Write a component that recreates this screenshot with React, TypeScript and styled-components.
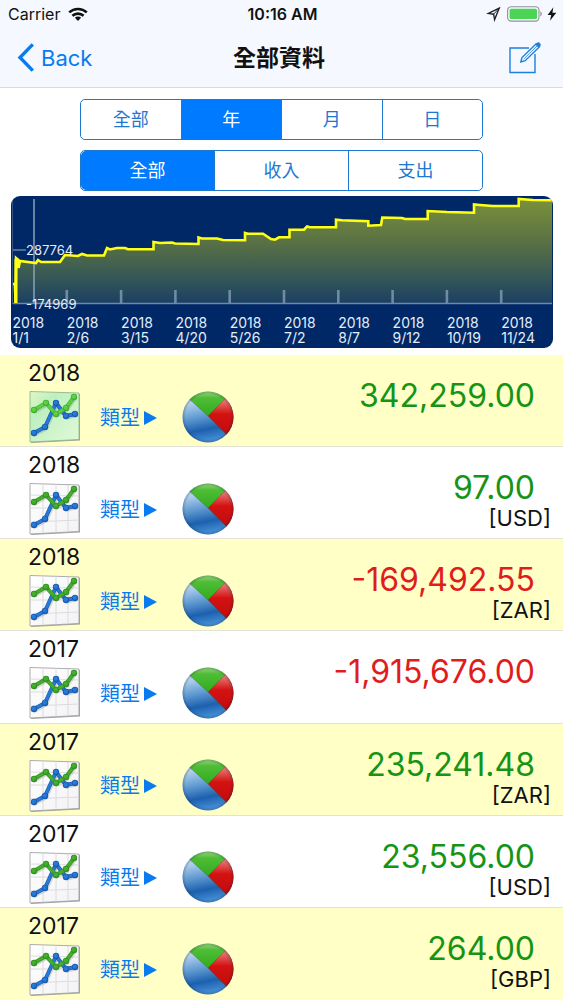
import React, { useState } from "react";
import styled, { createGlobalStyle, css } from "styled-components";

const GlobalStyle = createGlobalStyle`
  *, *::before, *::after { box-sizing: border-box; }
  body {
    margin: 0;
    background: #fff;
    color: #111;
    font-family: Inter, "Noto Sans CJK TC", sans-serif;
  }
  button, input { font: inherit; color: inherit; }
  button { margin: 0; padding: 0; border: 0; background: none; cursor: pointer; }
`;

const BLUE = "#087bf0";

const Page = styled.div`
  display: flex;
  flex-direction: column;
  min-height: 100vh;
`;

const Header = styled.header`
  background: #f5f9ff;
  border-bottom: 1px solid #d3dae8;
`;

const TripleBar = styled.div`
  display: grid;
  grid-template-columns: 1fr auto 1fr;
  align-items: center;
`;

const StatusBar = styled(TripleBar)`
  height: 28px;
  padding: 0 6px 0 8px;
  font-size: 16px;
  line-height: 20px;
`;

const NavBar = styled(TripleBar)`
  height: 59px;
  padding: 0 22px 0 17px;
`;

const Start = styled.div`
  display: flex;
  align-items: center;
  gap: 8px;
`;

const End = styled(Start)`
  justify-content: flex-end;
  gap: 4px;
`;

const Clock = styled.time`
  font-weight: 600;
`;

const BackButton = styled.button`
  display: flex;
  align-items: center;
  gap: 7px;
  color: ${BLUE};
  font-size: 22px;
  line-height: 28px;
`;

const IconButton = styled.button`
  display: block;
  color: #1c80dc;
  svg { display: block; }
`;

const Title = styled.h1`
  margin: 0;
  font-size: 23px;
  line-height: 28px;
  font-weight: 600;
`;

const Filters = styled.div`
  display: flex;
  flex-direction: column;
  gap: 10px;
  padding: 11px 80px 5px;
`;

const SegmentGroup = styled.fieldset`
  display: flex;
  height: 41px;
  min-width: 0;
  margin: 0;
  padding: 0;
  border: 1px solid #1f78cf;
  border-radius: 5px;
  overflow: hidden;
`;

const Segment = styled.label<{ $active: boolean }>`
  flex: 1;
  display: flex;
  align-items: center;
  justify-content: center;
  font-size: 18px;
  line-height: 24px;
  cursor: pointer;
  color: ${(p) => (p.$active ? "#fff" : "#1f78cf")};
  background: ${(p) => (p.$active ? "#007aff" : "#fff")};
  & + & { border-left: 1px solid #1f78cf; }
`;

const HiddenRadio = styled.input`
  position: absolute;
  opacity: 0;
  pointer-events: none;
`;

const ChartPanel = styled.figure`
  margin: 0 10px 7px 11px;
  border-radius: 9px;
  overflow: hidden;
  background: #002766;
  svg { display: block; width: 100%; height: auto; }
`;

const List = styled.ul`
  flex: 1;
  display: grid;
  grid-auto-rows: 1fr;
  margin: 0;
  padding: 0;
  list-style: none;
`;

const Row = styled.li`
  display: flex;
  justify-content: space-between;
  min-height: 92px;
  border-bottom: 1px solid #e2e2d8;
  background: #fff;
  &:nth-child(odd) { background: #ffffc6; }
  &:last-child { border-bottom: 0; }
`;

const RowInfo = styled.div`
  padding: 4px 0 0 28px;
`;

const Year = styled.div`
  font-size: 23px;
  line-height: 28px;
`;

const Actions = styled.div`
  display: flex;
  align-items: center;
  margin-top: 3px;
  svg { display: block; }
`;

const TypeButton = styled.button`
  display: flex;
  align-items: center;
  gap: 3px;
  margin: 0 25px 0 19px;
  padding-top: 2px;
  color: ${BLUE};
  font-size: 20px;
  line-height: 28px;
`;

const RowValue = styled.div`
  display: flex;
  flex-direction: column;
  align-items: flex-end;
  padding: 23px 12px 0 0;
`;

const Amount = styled.div<{ $negative: boolean }>`
  padding-right: 16px;
  font-size: 32px;
  line-height: 36px;
  ${(p) => (p.$negative ? css`color: #e01d1d;` : css`color: #159415;`)}
`;

const Currency = styled.div`
  font-size: 22px;
  line-height: 24px;
`;

function WifiIcon() {
  return (
    <svg width="20" height="15" viewBox="0 0 20 15" fill="none" stroke="#111" strokeWidth="2.6" aria-hidden="true">
      <path d="M1.2 5.4C6.2.8 13.8.8 18.8 5.4" />
      <path d="M4.4 8.8C7.6 5.9 12.4 5.9 15.6 8.8" />
      <path d="M6.9 10.7C8.7 9.2 11.3 9.2 13.1 10.7L10 14Z" fill="#111" stroke="none" />
    </svg>
  );
}

function LocationIcon() {
  return (
    <svg width="17" height="16" viewBox="0 0 17 16" fill="none" stroke="#222" strokeWidth="1.4" strokeLinejoin="miter" aria-hidden="true">
      <path d="M13.2 2.2L2.4 7.4L7.6 8.2L8.6 13.6Z" />
      <path d="M13.2 2.2L7.6 8.2" strokeWidth="1" />
    </svg>
  );
}

function BatteryIcon() {
  return (
    <svg width="36" height="16" viewBox="0 0 36 16" aria-hidden="true">
      <rect x=".6" y=".7" width="31.4" height="14.4" rx="3.6" fill="#f5f9ff" stroke="#8d9299" strokeWidth="1.1" />
      <rect x="2.6" y="2.7" width="27.4" height="10.4" rx="1.5" fill="#4cd455" />
      <path d="M33.4 5.3C35.2 6 35.2 9.8 33.4 10.5Z" fill="#8d9299" />
    </svg>
  );
}

function BoltIcon() {
  return (
    <svg width="10" height="14" viewBox="0 0 10 14" fill="#111" aria-hidden="true">
      <path d="M6.4.3L.6 7.9H4.2L3 13.7L9.3 5.7H5.4Z" />
    </svg>
  );
}

function BackIcon() {
  return (
    <svg width="17" height="29" viewBox="0 0 17 29" fill="none" stroke={BLUE} strokeWidth="3.4" aria-hidden="true">
      <path d="M15.8 1.4L3 14.5L15.8 27.6" />
    </svg>
  );
}

function ComposeIcon() {
  return (
    <svg width="32" height="32" viewBox="0 0 32 32" fill="none" stroke="currentColor" strokeWidth="1.4" aria-hidden="true">
      <path d="M20 6H1V30.5H26V12" />
      <path d="M11.8 20L13 15.6L27 1.9L30.2 5L16.2 18.7Z" />
      <path d="M14.8 17L28 4" strokeWidth=".8" />
      <path d="M26.6 2.2L28.2.9Q29.8 0 31 1.4Q32 2.8 31 4.2L29.8 5.4Z" fill="currentColor" strokeWidth=".6" />
    </svg>
  );
}

function LineChartIcon({ tinted }: { tinted: boolean }) {
  const blue = [[6, 43], [17, 37], [28, 13], [38, 26], [47, 24]];
  const green = [[6, 20], [18, 13], [28, 24], [38, 18], [46, 7]];
  const series = [
    { points: blue, dark: "#1a5cb4", light: "#277bd6" },
    { points: green, dark: tinted ? "#43b030" : "#32931f", light: tinted ? "#5ed044" : "#46ad2f" },
  ];
  return (
    <svg width="53" height="53" viewBox="0 0 53 53" aria-hidden="true">
      <defs>
        <linearGradient id="tint" x1="0" y1="0" x2="1" y2="1">
          <stop offset="0" stopColor="#e0f8c4" />
          <stop offset=".3" stopColor="#bdf0c0" />
          <stop offset="1" stopColor="#e3f9d9" />
        </linearGradient>
        <linearGradient id="paper" x1="0" y1="0" x2="1" y2="1">
          <stop offset="0" stopColor="#fff" />
          <stop offset="1" stopColor="#f3f3f5" />
        </linearGradient>
      </defs>
      <path d="M3 3L52 4V50.5L3 53Z" fill="#777" opacity=".65" />
      <path d="M2 1.5L51 3V49.5L2 52Z" fill={tinted ? "url(#tint)" : "url(#paper)"} stroke={tinted ? "#8fb98b" : "#a3a3a8"} strokeWidth=".9" />
      {!tinted && (
        <path d="M15 2V51M28 2V50.5M40 3V50M2 13L51 14M2 26L51 26M2 40L51 38" stroke="#d8d8de" strokeWidth=".9" />
      )}
      {series.map((s) => (
        <g key={s.dark} strokeLinejoin="round" strokeLinecap="round" fill="none">
          <polyline points={s.points.join(" ")} stroke="#555" opacity=".2" strokeWidth="4" transform="translate(1 1.6)" />
          <polyline points={s.points.join(" ")} stroke={s.dark} strokeWidth="4" />
          <polyline points={s.points.join(" ")} stroke={s.light} strokeWidth="2.8" />
          {s.points.map(([x, y]) => (
            <g key={x}>
              <circle cx={x} cy={y} r="3.2" fill={s.dark} />
              <circle cx={x - 0.2} cy={y - 0.4} r="2.2" fill={s.light} />
            </g>
          ))}
        </g>
      ))}
    </svg>
  );
}

function PieIcon() {
  return (
    <svg width="52" height="52" viewBox="0 0 52 52" aria-hidden="true">
      <defs>
        <clipPath id="disc"><circle cx="26" cy="26" r="25.5" /></clipPath>
        <linearGradient id="pieBlue" x1=".3" y1="0" x2=".5" y2="1">
          <stop offset=".2" stopColor="#b4d1ec" />
          <stop offset=".5" stopColor="#5c97d0" />
          <stop offset=".74" stopColor="#1d60ae" />
          <stop offset="1" stopColor="#4b96dc" />
        </linearGradient>
        <linearGradient id="pieGreen" x1="0" y1="0" x2="0" y2="1">
          <stop offset=".15" stopColor="#a3dc8a" />
          <stop offset=".4" stopColor="#4fbd36" />
          <stop offset="1" stopColor="#31ab1d" />
        </linearGradient>
        <linearGradient id="pieRed" x1="0" y1="0" x2="0" y2="1">
          <stop offset=".1" stopColor="#ea8a86" />
          <stop offset=".42" stopColor="#d31212" />
          <stop offset="1" stopColor="#bd0707" />
        </linearGradient>
        <radialGradient id="pieRim">
          <stop offset=".86" stopColor="#123" stopOpacity="0" />
          <stop offset="1" stopColor="#123" stopOpacity=".3" />
        </radialGradient>
      </defs>
      <g clipPath="url(#disc)">
        <rect width="52" height="52" fill="url(#pieBlue)" />
        <path d="M26 25L4 5V-5H50V1Z" fill="url(#pieGreen)" />
        <path d="M26 25L48 2H60V52L46 45Z" fill="url(#pieRed)" />
        <path d="M6 7L26 25L45 44M26 25L44 7" stroke="#26452f" strokeOpacity=".35" strokeWidth=".8" fill="none" />
        <rect width="52" height="52" fill="url(#pieRim)" />
      </g>
    </svg>
  );
}

const TREND: number[][] = [
  [2, 88], [4, 88], [4.5, 107], [5, 62], [7.5, 64], [7.5, 72], [9, 65], [25, 67], [27, 64], [30, 66], [49, 66],
  [54, 59], [67, 60], [71, 58], [76, 59.5], [93, 59.5], [96, 52], [99, 53.5], [106, 52], [114, 52], [117, 53.3],
  [142.5, 53.3], [142.5, 46], [149, 47], [161, 46.5], [164, 47.5], [187.5, 48], [187.5, 41.5], [191, 42.5],
  [206, 42.5], [212, 44], [234, 44.3], [234, 37], [237, 37.7], [252, 37.7], [260, 43], [264, 43.7], [268, 41.3],
  [278.5, 41.3], [278.5, 33.7], [293, 33.7], [296, 30.5], [299, 31.3], [325, 31.3], [325, 23.7], [331, 24.3],
  [357.3, 25.3], [357.3, 29.7], [370, 29], [371.3, 21.5], [391, 22], [394, 23], [416.7, 23], [416.7, 15],
  [436, 16], [463, 16.7], [463, 8.5], [469, 9], [482, 10], [507.7, 10], [507.7, 3], [522, 4], [541, 4.3],
];

const DATES = ["1/1", "2/6", "3/15", "4/20", "5/26", "7/2", "8/7", "9/12", "10/19", "11/24"];
const DATE_STEP = 54.3;

function BalanceChart() {
  const line = TREND.map((p) => p.join(",")).join(" ");
  return (
    <ChartPanel>
      <svg viewBox="0 0 542 152" fontFamily="Inter, sans-serif" fill="#e3eefb" role="img" aria-label="2018">
        <defs>
          <linearGradient id="area" gradientUnits="userSpaceOnUse" x1="0" y1="0" x2="0" y2="108">
            <stop offset="0" stopColor="#7d933a" />
            <stop offset=".45" stopColor="#576f45" />
            <stop offset=".75" stopColor="#365856" />
            <stop offset="1" stopColor="#1b3f64" />
          </linearGradient>
        </defs>
        <polygon points={`4,108 ${line} 541,108`} fill="url(#area)" />
        <g stroke="#8aa3b8" strokeOpacity=".75">
          <path d="M1.5 4V108" opacity=".5" />
          <path d="M2 107.5H541" strokeWidth="1.3" />
          <path d="M23 3V107" strokeWidth="2" />
          <path d="M2 54H15" strokeWidth="1.3" />
          {DATES.slice(1).map((d, i) => (
            <path key={d} d={`M${1.5 + DATE_STEP * (i + 1)} 94V107`} strokeWidth="2.6" />
          ))}
        </g>
        <polyline points={line} fill="none" stroke="#ffff14" strokeWidth="2.6" />
        <path d="M5 63V107" stroke="#ffff14" strokeWidth="3" />
        <g fontSize="13">
          <text x="15" y="59">287764</text>
          <text x="15" y="113">-174969</text>
        </g>
        <g fontSize="14">
          {DATES.map((d, i) => (
            <text key={d}>
              <tspan x={1.5 + DATE_STEP * i} y="132">2018</tspan>
              <tspan x={1.5 + DATE_STEP * i} y="147">{d}</tspan>
            </text>
          ))}
        </g>
      </svg>
    </ChartPanel>
  );
}

function SegmentedControl({ name, options, initial }: { name: string; options: string[]; initial: string }) {
  const [value, setValue] = useState(initial);
  return (
    <SegmentGroup>
      {options.map((option) => (
        <Segment key={option} $active={option === value}>
          <HiddenRadio type="radio" name={name} checked={option === value} onChange={() => setValue(option)} />
          {option}
        </Segment>
      ))}
    </SegmentGroup>
  );
}

const RECORDS = [
  { year: 2018, amount: "342,259.00" },
  { year: 2018, amount: "97.00", currency: "USD" },
  { year: 2018, amount: "-169,492.55", currency: "ZAR" },
  { year: 2017, amount: "-1,915,676.00" },
  { year: 2017, amount: "235,241.48", currency: "ZAR" },
  { year: 2017, amount: "23,556.00", currency: "USD" },
  { year: 2017, amount: "264.00", currency: "GBP" },
];

export default function App() {
  const [selected, setSelected] = useState(0);
  return (
    <Page>
      <GlobalStyle />
      <Header>
        <StatusBar>
          <Start>Carrier <WifiIcon /></Start>
          <Clock>10:16 AM</Clock>
          <End>
            <LocationIcon />
            <BatteryIcon />
            <BoltIcon />
          </End>
        </StatusBar>
        <NavBar>
          <Start><BackButton type="button"><BackIcon />Back</BackButton></Start>
          <Title>全部資料</Title>
          <End><IconButton type="button" aria-label="Edit"><ComposeIcon /></IconButton></End>
        </NavBar>
      </Header>
      <Filters>
        <SegmentedControl name="period" options={["全部", "年", "月", "日"]} initial="年" />
        <SegmentedControl name="kind" options={["全部", "收入", "支出"]} initial="全部" />
      </Filters>
      <BalanceChart />
      <List>
        {RECORDS.map((record, index) => (
          <Row key={record.amount}>
            <RowInfo>
              <Year>{record.year}</Year>
              <Actions>
                <IconButton type="button" aria-label="Trend" onClick={() => setSelected(index)}>
                  <LineChartIcon tinted={index === selected} />
                </IconButton>
                <TypeButton type="button">
                  類型
                  <svg width="14" height="14" viewBox="0 0 14 14" fill="currentColor" aria-hidden="true">
                    <path d="M1 0L14 7L1 14Z" />
                  </svg>
                </TypeButton>
                <IconButton type="button" aria-label="Breakdown"><PieIcon /></IconButton>
              </Actions>
            </RowInfo>
            <RowValue>
              <Amount $negative={record.amount.startsWith("-")}>{record.amount}</Amount>
              {record.currency && <Currency>[{record.currency}]</Currency>}
            </RowValue>
          </Row>
        ))}
      </List>
    </Page>
  );
}
